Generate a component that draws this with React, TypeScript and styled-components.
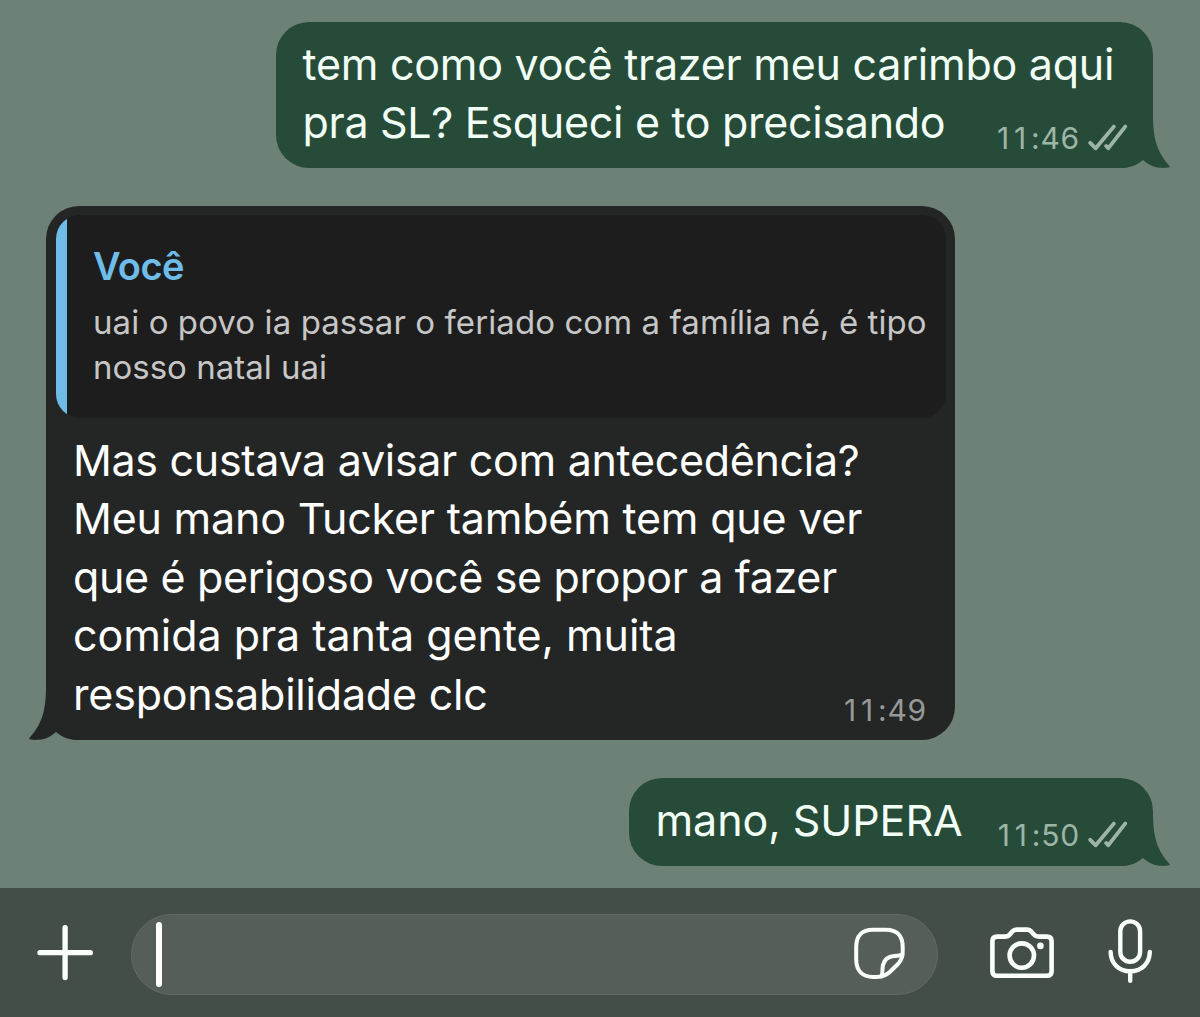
import React from 'react'
import styled, { createGlobalStyle } from 'styled-components'

type Side = 'in' | 'out'

interface Line {
    text: string;
    tracking: number;
}

interface MessageProps {
    side: Side;
    width: number;
    hour: string;
    minutes: string;
    lines: Line[];
    quote?: { author: string; lines: Line[] };
}

const messages: MessageProps[] = [
    {
        side: 'out',
        width: 877,
        hour: '11',
        minutes: '46',
        lines: [
            { text: 'tem como você trazer meu carimbo aqui', tracking: -0.25 },
            { text: 'pra SL? Esqueci e to precisando', tracking: -0.3 },
        ],
    },
    {
        side: 'in',
        width: 909,
        hour: '11',
        minutes: '49',
        quote: {
            author: 'Você',
            lines: [
                { text: 'uai o povo ia passar o feriado com a família né, é tipo', tracking: 0.08 },
                { text: 'nosso natal uai', tracking: 0 },
            ],
        },
        lines: [
            { text: 'Mas custava avisar com antecedência?', tracking: -0.31 },
            { text: 'Meu mano Tucker também tem que ver', tracking: -0.21 },
            { text: 'que é perigoso você se propor a fazer', tracking: -0.33 },
            { text: 'comida pra tanta gente, muita', tracking: -0.05 },
            { text: 'responsabilidade clc', tracking: -0.2 },
        ],
    },
    {
        side: 'out',
        width: 524,
        hour: '11',
        minutes: '50',
        lines: [{ text: 'mano, SUPERA', tracking: -0.05 }],
    },
]

const Message = ({ side, width, hour, minutes, lines, quote }: MessageProps) => {
    const head = lines.slice(0, -1);
    const last = lines[lines.length - 1];
    return (
        <Bubble $side={side} $width={width}>
            {quote && (
                <Quote>
                    <QuoteBar />
                    <QuoteBody>
                        <Author>{quote.author}</Author>
                        {quote.lines.map((line) => (
                            <QuoteLine key={line.text} $tracking={line.tracking}>{line.text}</QuoteLine>
                        ))}
                    </QuoteBody>
                </Quote>
            )}
            <Body $side={side}>
                {head.map((line) => (
                    <TextLine key={line.text} $tracking={line.tracking}>{line.text}</TextLine>
                ))}
                <LastRow>
                    <TextLine $tracking={last.tracking}>{last.text}</TextLine>
                    <Meta $side={side}>
                        <Time><Hour>{hour}</Hour>:{minutes}</Time>
                        {side === 'out' && (
                            <Checks viewBox="0 0 40 28">
                                <path d="M2.2 18.8 L7.7 24.3 L25.8 2.6 M18.2 22 L20.2 24.3 L37.2 2.6" />
                            </Checks>
                        )}
                    </Meta>
                </LastRow>
            </Body>
            <Tail $side={side} viewBox="0 0 52 70">
                <path d="M0 34 L34.9 16 C35.2 42 39 54 52 68.5 C51 70 47 70 42 69.8 C35 69.2 30 66.5 25 62 C18 68 11 70 2 70 H0 Z" />
            </Tail>
        </Bubble>
    )
}

const App = () => {
  return (
    <Screen>
        <GlobalStyle />
        <Chat>
            {messages.map((message) => (
                <Message key={message.minutes} {...message} />
            ))}
        </Chat>
        <Composer>
            <Icon $width={57} $height={81} $stroke={5.3} viewBox="0 0 57 81">
                <path d="M3 38.7H53.3M28.1 13.6V63.6" />
            </Icon>
            <Input>
                <Caret />
                <Icon $width={54} $height={79} $stroke={4} viewBox="0 0 54 79">
                    <path d="M49.7 37 V32 C49.7 20 43.5 14.7 33 14.7 H20 C9 14.7 3.2 20.5 3.2 32 V44 C3.2 56 9.5 61.9 20 61.9 H24 C29 61.9 32.5 61 36.5 57.3 L45 49 C48.7 45 49.7 42 49.7 37 Z" />
                    <path d="M28.5 61.5 C30 58 29 54 30 50 C31.5 44 35.5 41.4 41 41 C44.5 40.8 47 40.8 49.3 39.5" />
                </Icon>
            </Input>
            <Icon $width={68} $height={81} $stroke={4.6} viewBox="0 0 68 81">
                <path d="M9 22.6 H16.5 C19 22.6 20.5 22 22 20.2 L24 17.8 C25.5 16.1 26.8 15.6 28.8 15.6 H38.8 C40.8 15.6 42.1 16.1 43.5 17.8 L45.6 20.2 C47 22 48.5 22.6 51 22.6 H59 C62.3 22.6 63.6 24 63.6 27.2 V57.2 C63.6 60.4 62.3 61.8 59 61.8 H9 C5.7 61.8 4.4 60.4 4.4 57.2 V27.2 C4.4 24 5.7 22.6 9 22.6 Z" />
                <circle cx="33.8" cy="41.6" r="12.2" />
                <circle className="dot" cx="52.4" cy="31.9" r="3.3" />
            </Icon>
            <Icon $width={48} $height={81} $stroke={4.4} viewBox="0 0 48 81">
                <rect x="14.3" y="7.4" width="19.8" height="40.4" rx="9.9" />
                <path d="M4.6 38 C5 50 13 57.3 24.2 57.3 C35.4 57.3 43.4 50 43.8 38 M24.2 57.3 V66.8" />
            </Icon>
        </Composer>
    </Screen>
  )
}

const GlobalStyle = createGlobalStyle`
    body{
        margin: 0;
        background: #6d8177;
        font-family: Inter, "Liberation Sans", sans-serif;
    }
`

const Screen = styled.div`
    display: flex;
    flex-direction: column;
    width: 1200px;
    height: 1017px;
    overflow: hidden;
    background: #6d8177;
`

const Chat = styled.div`
    flex: 1;
    display: flex;
    flex-direction: column;
    gap: 38px;
    padding: 22px 47px 0 46px;
`

const Bubble = styled.div<{ $side: Side; $width: number }>`
    position: relative;
    box-sizing: border-box;
    width: ${({ $width }) => $width}px;
    align-self: ${({ $side }) => ($side === 'out' ? 'flex-end' : 'flex-start')};
    border-radius: 33px;
    color: ${({ $side }) => ($side === 'out' ? '#f2fff6' : '#ffffff')};
    background: ${({ $side }) => ($side === 'out' ? '#274b39' : '#242625')};
    // the tail takes the same fill
    fill: ${({ $side }) => ($side === 'out' ? '#274b39' : '#242625')};
`

const Tail = styled.svg<{ $side: Side }>`
    position: absolute;
    bottom: 0;
    width: 52px;
    height: 70px;
    ${({ $side }) => ($side === 'out' ? 'right: -17px;' : 'left: -17px; transform: scaleX(-1);')}
`

const Quote = styled.div`
    display: flex;
    height: 203px;
    margin: 0 9px 0 10px;
    border-radius: 24px;
    overflow: hidden;
    background: #1d1d1d;
    position: relative;
    top: 9px;
`

const QuoteBar = styled.div`
    width: 11px;
    background: #6fbce8;
`

const QuoteBody = styled.div`
    padding: 28px 0 0 26px;
`

const Author = styled.div`
    margin-bottom: 11px;
    font-size: 38px;
    font-weight: 600;
    line-height: 46px;
    letter-spacing: -0.6px;
    color: #6fbce8;
`

const QuoteLine = styled.div<{ $tracking: number }>`
    font-size: 33px;
    line-height: 45px;
    letter-spacing: ${({ $tracking }) => $tracking}px;
    white-space: nowrap;
    color: #c6c6c6;
`

const Body = styled.div<{ $side: Side }>`
    position: relative;
    z-index: 1;
    padding: ${({ $side }) => ($side === 'out' ? '12.5px 25px 16.5px 26.5px' : '21.5px 28px 16.5px 27px')};
`

const TextLine = styled.div<{ $tracking: number }>`
    font-size: 43px;
    line-height: 58.6px;
    letter-spacing: ${({ $tracking }) => $tracking}px;
    white-space: nowrap;
`

const LastRow = styled.div`
    display: flex;
    justify-content: space-between;
    align-items: flex-end;
`

const Meta = styled.div<{ $side: Side }>`
    display: flex;
    align-items: center;
    gap: 8px;
    height: 30px;
    margin-bottom: -1px;
    color: ${({ $side }) => ($side === 'out' ? '#9db5a7' : '#979998')};
`

const Time = styled.span`
    font-size: 30px;
    line-height: 30px;
    letter-spacing: 0.8px;
`

const Hour = styled.span`
    letter-spacing: 4.8px;
`

const Checks = styled.svg`
    width: 40px;
    height: 28px;
    path{
        fill: none;
        stroke: currentColor;
        stroke-width: 3.8;
        stroke-linecap: round;
        stroke-linejoin: round;
    }
`

const Composer = styled.div`
    display: flex;
    align-items: flex-start;
    box-sizing: border-box;
    height: 129px;
    padding: 26px 0 0 37px;
    background: #434e48;
`

const Input = styled.div`
    display: flex;
    justify-content: space-between;
    box-sizing: border-box;
    width: 807px;
    height: 81px;
    margin: 0 50px 0 37px;
    padding: 0 30px 0 24px;
    border: 1px solid #616b65;
    border-radius: 41px;
    background: #555e59;
`

const Caret = styled.div`
    width: 6px;
    height: 65px;
    margin-top: 7px;
    border-radius: 3px;
    background: #ffffff;
`

const Icon = styled.svg<{ $width: number; $height: number; $stroke: number }>`
    flex-shrink: 0;
    width: ${({ $width }) => $width}px;
    height: ${({ $height }) => $height}px;
    fill: none;
    stroke: #fbfffc;
    stroke-width: ${({ $stroke }) => $stroke};
    stroke-linecap: round;
    stroke-linejoin: round;
    & + &{
        margin-left: 50px;
    }
    .dot{
        fill: #fbfffc;
        stroke: none;
    }
`

export default App
